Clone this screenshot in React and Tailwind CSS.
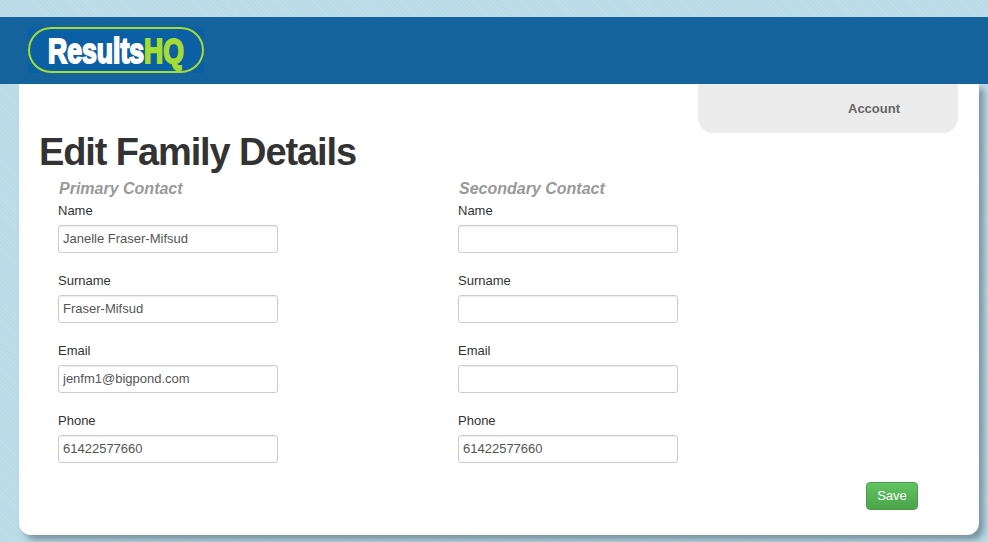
const left = [
  ["Name", "Janelle Fraser-Mifsud"],
  ["Surname", "Fraser-Mifsud"],
  ["Email", "jenfm1@bigpond.com"],
  ["Phone", "61422577660"],
];
const right = [
  ["Name", ""],
  ["Surname", ""],
  ["Email", ""],
  ["Phone", "61422577660"],
];

function Column({ title, fields, className }) {
  return (
    <div className={className}>
      <h2 className="h-[18px] text-[16px] leading-[18px] font-bold italic text-[#999999]">{title}</h2>
      <div className="mt-[4px] -ml-px flex flex-col gap-[14px]">
        {fields.map(([label, value]) => (
          <div key={label} className="h-[56px]">
            <label className="block h-[18px] text-[13px] leading-[18px] text-[#333333]">{label}</label>
            <input
              readOnly
              value={value}
              className="mt-[5px] block h-[28px] w-[220px] rounded-[3px] border border-[#cccccc] bg-white px-[4px] pb-[2px] text-[13px] text-[#555555] shadow-[inset_0_1px_1px_rgba(0,0,0,0.075)] outline-none"
            />
          </div>
        ))}
      </div>
    </div>
  );
}

export default function App() {
  return (
    <div className="h-[542px] w-[988px] overflow-hidden bg-[#bcdde9] bg-[repeating-linear-gradient(45deg,rgba(255,255,255,0.04)_0px,rgba(255,255,255,0.04)_1px,rgba(120,170,190,0.04)_1px,rgba(120,170,190,0.04)_3px)] pt-[17px] font-['Liberation_Sans',Arial,sans-serif]">
      <header className="relative z-10 flex h-[67px] items-start bg-[#14639c] pl-[28px] pt-[10px]">
        <div className="h-[46px] w-[176px] bg-[#0b5fa5]">
          <div className="flex h-full items-center overflow-hidden rounded-[23px] border-[2px] border-[#a3dc32] bg-[#0b5fa5] pl-[18px]">
            <span className="origin-left scale-x-[0.76] whitespace-nowrap text-[35px] leading-none font-bold text-white [-webkit-text-stroke:2px_white]">
              Results<span className="text-[#a3dc32] [-webkit-text-stroke:2px_#a3dc32]">HQ</span>
            </span>
          </div>
        </div>
      </header>
      <main className="ml-[19px] h-[451px] w-[960px] rounded-b-[12px] bg-white shadow-[5px_5px_6px_rgba(70,90,100,0.55)]">
        <div className="flex justify-end pr-[21px]">
          <div className="flex h-[49px] w-[260px] items-start justify-end rounded-b-[15px] bg-[#ececec] pr-[58px] pt-[16px]">
            <span className="text-[13px] leading-[17px] font-bold text-[#666666]">Account</span>
          </div>
        </div>
        <h1 className="mt-[-4px] pl-[20px] text-[38px] leading-[46px] font-bold tracking-[-1.1px] text-[#333333]">
          Edit Family Details
        </h1>
        <div className="mt-[5px] flex pl-[40px]">
          <Column title="Primary Contact" fields={left} className="w-[400px]" />
          <Column title="Secondary Contact" fields={right} className="w-[400px]" />
        </div>
        <div className="mt-[14px] flex justify-end pr-[61px]">
          <button className="h-[28px] w-[52px] rounded-[4px] border border-[#4a9e4a] bg-gradient-to-b from-[#62c462] to-[#4aa34a] text-[13px] text-white">
            Save
          </button>
        </div>
      </main>
    </div>
  );
}
